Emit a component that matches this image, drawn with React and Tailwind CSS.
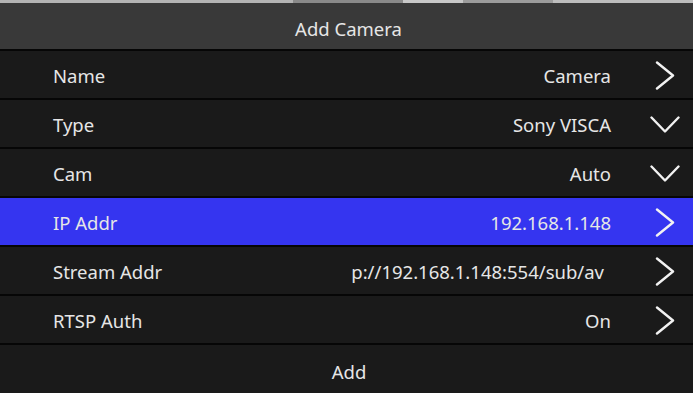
import React from "react";

const Right = () => (
  <svg width="30" height="30" viewBox="0 0 30 30" fill="none">
    <polyline points="7,2.5 23,15.5 7,28.5" stroke="#f2f2f2" strokeWidth="2.4" strokeLinecap="round" strokeLinejoin="round" />
  </svg>
);
const Down = () => (
  <svg width="30" height="30" viewBox="0 0 30 30" fill="none">
    <polyline points="1.5,8.5 15,22.5 28.5,8.5" stroke="#f2f2f2" strokeWidth="2.4" strokeLinecap="round" strokeLinejoin="round" />
  </svg>
);

const rows = [
  { label: "Name", value: "Camera", icon: "r" },
  { label: "Type", value: "Sony VISCA", icon: "d" },
  { label: "Cam", value: "Auto", icon: "d" },
  { label: "IP Addr", value: "192.168.1.148", icon: "r", active: true },
  { label: "Stream Addr", value: "p://192.168.1.148:554/sub/av", icon: "r", stream: true },
  { label: "RTSP Auth", value: "On", icon: "r" },
];

export default function App() {
  return (
    <div
      className="w-[693px] h-[393px] overflow-hidden bg-[#060606] flex flex-col text-[18.5px] text-[#e6e6e6]"
      style={{ fontFamily: '"Noto Sans", "Open Sans", sans-serif' }}
    >
      <div className="h-[3px] flex">
        <div className="flex-1 bg-[#b4b4b4]" />
        <div className="w-[110px] bg-[#8a8a8a]" />
        <div className="w-[60px] bg-[#c8c8c8]" />
        <div className="w-[90px] bg-[#9c9c9c]" />
        <div className="w-[140px] bg-[#bdbdbd]" />
      </div>
      <div className="h-[46px] bg-[#393939] flex items-center justify-center pl-[4px]">
        <span className="pt-[5px]">Add Camera</span>
      </div>
      <div className="flex flex-col gap-[2px] pt-[2px]">
        {rows.map((r) => (
          <div
            key={r.label}
            className={`h-[47px] flex items-center pl-[53px] pr-[13px] ${r.active ? "bg-[#3535f0]" : "bg-[#1a1a1a]"}`}
          >
            <span className="flex-1 pt-[3px]">{r.label}</span>
            <span className={r.stream ? "mr-[46px] whitespace-nowrap pt-[3px]" : "mr-[39px] whitespace-nowrap pt-[3px]"}>{r.value}</span>
            {r.icon === "r" ? <Right /> : <Down />}
          </div>
        ))}
        <div className="h-[48px] bg-[#1a1a1a] flex items-center justify-center pl-[5px]">
          <span className="pt-[5px]">Add</span>
        </div>
      </div>
    </div>
  );
}
